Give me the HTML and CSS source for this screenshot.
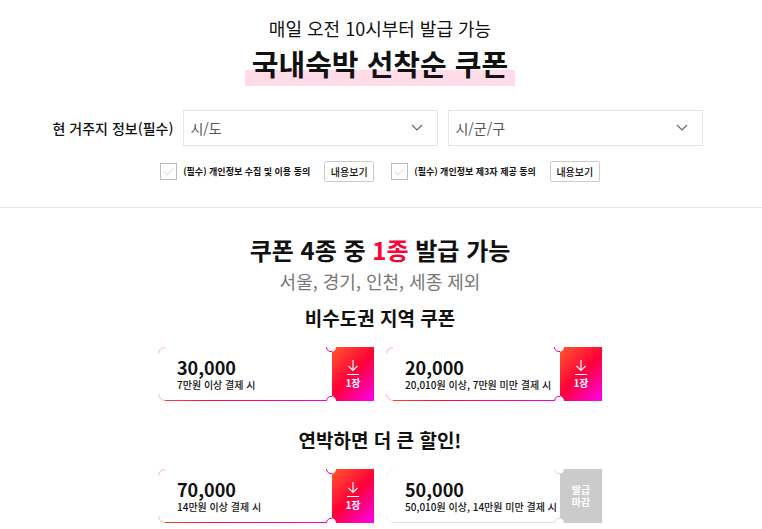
FILE: index.html
```html
<!DOCTYPE html>
<html lang="ko">
<head>
    <meta charset="UTF-8">
    <meta name="viewport" content="width=device-width, initial-scale=1.0">
    <title>국내숙박 선착순 쿠폰</title>
    <link rel="stylesheet" href="styles.css">
</head>
<body>
    <!-- Shared shapes -->
    <svg class="sprite" width="0" height="0" aria-hidden="true">
        <defs>
            <linearGradient id="line" gradientUnits="userSpaceOnUse" x1="0" y1="0" x2="178" y2="0">
                <stop offset="0" stop-color="#ff4b33"/>
                <stop offset="0.3" stop-color="#ff0a3c"/>
                <stop offset="1" stop-color="#f500e0"/>
            </linearGradient>
            <linearGradient id="fill" gradientUnits="userSpaceOnUse" x1="171" y1="3" x2="219" y2="51">
                <stop offset="0" stop-color="#ff5a2b"/>
                <stop offset="0.5" stop-color="#ff0038"/>
                <stop offset="1" stop-color="#ff00f0"/>
            </linearGradient>
        </defs>
        <symbol id="ticket" viewBox="0 0 216 54">
            <rect class="ticket-side" x="174" y="0" width="42" height="54"/>
            <path class="ticket-corner" d="M0.5 6.5A7 7 0 0 1 7 0.5M0.5 47A7 7 0 0 0 7 53.5"/>
            <path class="ticket-line" d="M7 53.5H168.5"/>
            <circle cx="173" cy="0" r="5" fill="#fff"/>
            <circle cx="173" cy="54" r="5" fill="#fff"/>
            <path class="ticket-notch" d="M168.5 0A4.5 4.5 0 0 0 174 4.5M168.5 54A4.5 4.5 0 0 1 174 49.5"/>
        </symbol>
        <symbol id="download" viewBox="0 0 12 16">
            <path d="M6 1V11.5M1.5 7L6 11.5L10.5 7" fill="none" stroke="#fff" stroke-width="1.2"/>
            <path d="M0 15.5H12" fill="none" stroke="#fff"/>
        </symbol>
        <symbol id="chevron" viewBox="0 0 12 8">
            <path d="M1 1L6 6L11 1" fill="none" stroke="#666" stroke-width="1.2"/>
        </symbol>
    </svg>

    <!-- Residence form -->
    <section class="apply">
        <p class="apply-time">매일 오전 10시부터 발급 가능</p>
        <h1><span class="highlight">국내숙박 선착순 쿠폰</span></h1>
        <form>
            <div class="region">
                <label for="sido">현 거주지 정보(필수)</label>
                <div class="select-box">
                    <select id="sido" name="sido">
                        <option>시/도</option>
                    </select>
                    <svg class="chevron"><use href="#chevron"/></svg>
                </div>
                <div class="select-box">
                    <select id="sigungu" name="sigungu" aria-label="시/군/구">
                        <option>시/군/구</option>
                    </select>
                    <svg class="chevron"><use href="#chevron"/></svg>
                </div>
            </div>
            <div class="agree-list">
                <div class="agree">
                    <input type="checkbox" id="agree1" name="agree1">
                    <label for="agree1">(필수) 개인정보 수집 및 이용 동의</label>
                    <button type="button">내용보기</button>
                </div>
                <div class="agree">
                    <input type="checkbox" id="agree2" name="agree2">
                    <label for="agree2">(필수) 개인정보 제3자 제공 동의</label>
                    <button type="button">내용보기</button>
                </div>
            </div>
        </form>
    </section>

    <!-- Coupons -->
    <section class="coupons">
        <h2>쿠폰 4종 중 <em>1종</em> 발급 가능</h2>
        <p class="except">서울, 경기, 인천, 세종 제외</p>

        <h3>비수도권 지역 쿠폰</h3>
        <div class="coupon-row">
            <div class="coupon">
                <svg class="frame"><use href="#ticket"/></svg>
                <div class="info">
                    <strong>30,000</strong>
                    <p>7만원 이상 결제 시</p>
                </div>
                <button type="button"><svg class="download"><use href="#download"/></svg>1장</button>
            </div>
            <div class="coupon">
                <svg class="frame"><use href="#ticket"/></svg>
                <div class="info">
                    <strong>20,000</strong>
                    <p>20,010원 이상, 7만원 미만 결제 시</p>
                </div>
                <button type="button"><svg class="download"><use href="#download"/></svg>1장</button>
            </div>
        </div>

        <h3>연박하면 더 큰 할인!</h3>
        <div class="coupon-row">
            <div class="coupon">
                <svg class="frame"><use href="#ticket"/></svg>
                <div class="info">
                    <strong>70,000</strong>
                    <p>14만원 이상 결제 시</p>
                </div>
                <button type="button"><svg class="download"><use href="#download"/></svg>1장</button>
            </div>
            <div class="coupon closed">
                <svg class="frame"><use href="#ticket"/></svg>
                <div class="info">
                    <strong>50,000</strong>
                    <p>50,010원 이상, 14만원 미만 결제 시</p>
                </div>
                <button type="button" disabled>발급<br>마감</button>
            </div>
        </div>
    </section>
</body>
</html>
```
FILE: styles.css
```css
* {
    box-sizing: border-box;
}

body {
    font-family: 'Noto Sans CJK KR', 'Noto Sans', sans-serif;
    margin: 0;
    background-color: #fff;
    color: #111;
}

h1, h2, h3, p {
    margin: 0;
}

button, select, input {
    font-family: inherit;
    color: inherit;
    margin: 0;
}

.sprite {
    position: absolute;
}

/* Residence form */
.apply {
    padding: 15px 2px 25px 0;
    border-bottom: 1px solid #e8e8e8;
    text-align: center;
}

.apply-time {
    font-size: 18px;
    line-height: 26px;
}

h1 {
    font-size: 29px;
    line-height: 44px;
}

.highlight {
    display: inline-block;
    vertical-align: top;
    padding: 0 7px 1px;
    background: linear-gradient(#ffdce8, #ffdce8) bottom / 100% 16px no-repeat;
}

.region {
    display: flex;
    justify-content: center;
    align-items: center;
    gap: 10px;
    margin-top: 24px;
    padding-right: 4px;
}

.region label {
    font-size: 14px;
    line-height: 20px;
    font-weight: 500;
}

.select-box {
    position: relative;
    width: 255px;
}

.select-box select {
    display: block;
    width: 100%;
    height: 36px;
    padding: 0 6px;
    font-size: 14px;
    color: #555;
    border: 1px solid #e5e5e5;
    border-radius: 0;
    background: #fff;
    appearance: none;
}

.chevron {
    position: absolute;
    top: 14px;
    right: 15px;
    width: 12px;
    height: 8px;
    pointer-events: none;
}

.agree-list {
    display: flex;
    justify-content: center;
    gap: 17px;
    margin-top: 15px;
}

.agree {
    display: flex;
    align-items: center;
}

.agree input {
    width: 17px;
    height: 17px;
    border: 1px solid #bbb;
    appearance: none;
    display: grid;
    place-items: center;
}

.agree input::before {
    content: "";
    width: 8px;
    height: 4px;
    margin-bottom: 2px;
    border-left: 1px solid #ddd;
    border-bottom: 1px solid #ddd;
    transform: rotate(-45deg);
}

.agree input:checked::before {
    border-color: #111;
}

.agree label {
    margin: 0 14px 0 6px;
    font-size: 9px;
    line-height: 14px;
    font-weight: 700;
}

.agree button {
    width: 50px;
    height: 21px;
    padding: 0 0 1px;
    font-size: 10px;
    font-weight: 500;
    border: 1px solid #ccc;
    border-radius: 2px;
    background: #fff;
}

/* Coupons */
.coupons {
    padding: 25px 2px 6px 0;
    text-align: center;
}

h2 {
    font-size: 24px;
    line-height: 34px;
}

h2 em {
    font-style: normal;
    color: #ff0038;
}

.except {
    margin-bottom: 8px;
    font-size: 18px;
    line-height: 28px;
    color: #777;
}

h3 {
    font-size: 19px;
    line-height: 30px;
}

.coupon-row {
    display: flex;
    justify-content: center;
    gap: 12px;
    margin: 14px 0 24px;
}

.coupon-row:last-child {
    margin-bottom: 0;
}

.coupon {
    position: relative;
    display: flex;
    width: 216px;
    height: 54px;
    text-align: left;
}

.frame {
    position: absolute;
    inset: 0;
    width: 100%;
    height: 100%;
    --side: url(#fill);
    --line: url(#line);
    --corner: #ffb3a8;
    --notch: #f0009c;
}

.closed .frame {
    --side: #cbcbcb;
    --line: #e2e2e2;
    --corner: #eee;
    --notch: #ddd;
}

.ticket-side {
    fill: var(--side);
}

.ticket-corner {
    fill: none;
    stroke: var(--corner);
}

.ticket-line {
    fill: none;
    stroke: #ff0a3c;
    stroke: var(--line);
}

.ticket-notch {
    fill: none;
    stroke: var(--notch);
}

.info {
    position: relative;
    flex: 1;
    padding: 9px 0 0 19px;
    white-space: nowrap;
}

.info strong {
    display: block;
    font-size: 18px;
    line-height: 23px;
}

.info p {
    font-size: 10px;
    line-height: 12px;
    font-weight: 500;
}

.coupon button {
    position: relative;
    display: flex;
    flex-direction: column;
    align-items: center;
    justify-content: center;
    width: 42px;
    padding: 0;
    font-size: 10px;
    line-height: 12px;
    font-weight: 700;
    color: #fff;
    border: none;
    background: none;
}

.download {
    width: 12px;
    height: 16px;
    margin-bottom: 2px;
}
```
